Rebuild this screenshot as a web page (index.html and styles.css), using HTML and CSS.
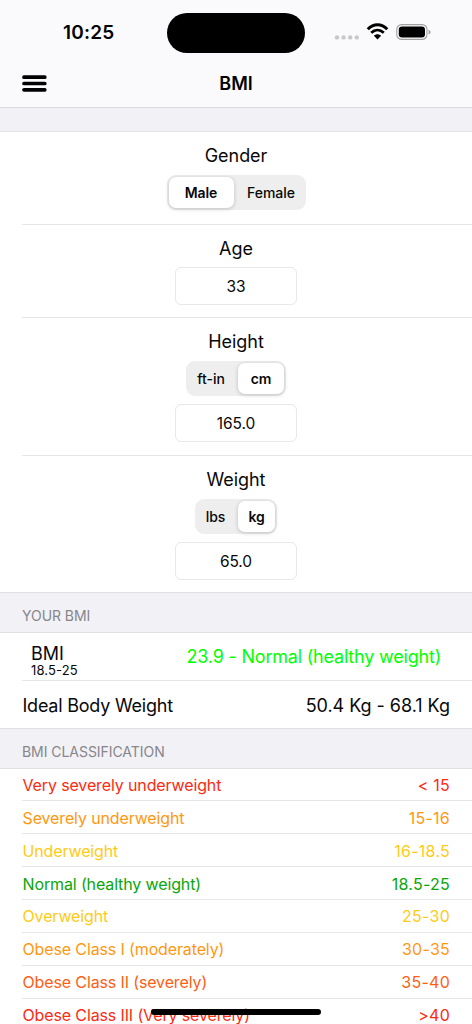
FILE: index.html
```html
<!DOCTYPE html>
<html lang="en">
<head>
<meta charset="utf-8">
<title>BMI</title>
<link rel="stylesheet" href="styles.css">
</head>
<body>
<div class="phone">
  <header class="top">
    <div class="status">
      <span class="time">10:25</span>
      <span class="island"></span>
      <svg class="indicators" width="98" height="20" viewBox="0 0 98 20">
        <g fill="#c8c8cc"><circle cx="3" cy="15.4" r="2.2"/><circle cx="9.6" cy="15.4" r="2.2"/><circle cx="16.2" cy="15.4" r="2.2"/><circle cx="22.8" cy="15.4" r="2.2"/></g>
        <path d="M33.8 7.2C39.5 1.2 47.5 1.2 53.2 7.2" fill="none" stroke="#000" stroke-width="3"/>
        <path d="M37.2 10.8C41 7.2 46 7.2 49.8 10.8" fill="none" stroke="#000" stroke-width="2.8"/>
        <path d="M39.9 13.8C42 11.8 45 11.8 47.1 13.8L43.5 17.4Z"/>
        <rect x="62.8" y="2.6" width="30.2" height="14.8" rx="4.8" fill="none" stroke="#a0a0a3" stroke-width="1.1"/>
        <rect x="64.8" y="4.5" width="26.2" height="11" rx="3.2"/>
        <path d="M94.6 7.7C97.2 8.6 97.2 11.6 94.6 12.5Z" fill="#a0a0a3"/>
      </svg>
    </div>
    <div class="nav">
      <svg class="menu" width="25" height="17" viewBox="0 0 25 17"><path d="M2 2.2H22.8M2 8.5H22.8M2 14.8H22.8" stroke="#000" stroke-width="3.7" stroke-linecap="round"/></svg>
      <h1 class="title">BMI</h1>
    </div>
  </header>
  <div class="gap"></div>
  <main>
    <section class="form">
      <div class="field gender"><label class="label">Gender</label>
        <div class="segment"><span class="option on">Male</span><span class="option">Female</span></div></div>
      <div class="field age"><label class="label">Age</label><div class="input">33</div></div>
      <div class="field height"><label class="label">Height</label>
        <div class="segment"><span class="option">ft-in</span><span class="option on">cm</span></div><div class="input">165.0</div></div>
      <div class="field weight"><label class="label">Weight</label>
        <div class="segment"><span class="option">lbs</span><span class="option on">kg</span></div><div class="input">65.0</div></div>
    </section>
    <h2 class="heading">YOUR BMI</h2>
    <section class="results">
      <div class="result bmi"><div class="name"><span>BMI</span><small class="range">18.5-25</small></div><span class="verdict">23.9 - Normal (healthy weight)</span></div>
      <div class="result"><span class="ideal">Ideal Body Weight</span><span class="kilos">50.4 Kg - 68.1 Kg</span></div>
    </section>
    <h2 class="heading">BMI CLASSIFICATION</h2>
    <section class="classes">
      <div class="class red"><span>Very severely underweight</span><span class="value">&lt; 15</span></div>
      <div class="class orange"><span>Severely underweight</span><span class="value">15-16</span></div>
      <div class="class yellow"><span>Underweight</span><span class="value">16-18.5</span></div>
      <div class="class green"><span>Normal (healthy weight)</span><span class="value">18.5-25</span></div>
      <div class="class yellow"><span>Overweight</span><span class="value">25-30</span></div>
      <div class="class orange"><span>Obese Class I (moderately)</span><span class="value">30-35</span></div>
      <div class="class deep"><span>Obese Class II (severely)</span><span class="value">35-40</span></div>
      <div class="class red"><span>Obese Class III (Very severely)</span><span class="value">&gt;40</span></div>
    </section>
  </main>
  <div class="home"></div>
</div>
</body>
</html>
```
FILE: styles.css
```css
* { box-sizing: border-box; }
body { margin: 0; background: #fff; color: #080808; font-family: Inter, "Liberation Sans", sans-serif; }
.phone { position: relative; width: 472px; height: 1024px; overflow: hidden; }
.top { height: 108px; background: #fafafc; border-bottom: 1px solid #d9d9dc; }
.status { height: 60px; display: grid; grid-template-columns: 167px 138px 1fr; padding-top: 12px; }
.time { padding-left: 63px; font-size: 19px; font-weight: 600; line-height: 42px; letter-spacing: .2px; color: #000; }
.island { height: 40px; margin-top: 1px; border-radius: 20px; background: #000; }
.indicators { margin: 10px 0 0 29px; }
.nav { height: 47px; display: grid; grid-template-columns: 1fr auto 1fr; align-items: center; padding-left: 22px; padding-right: 22px; }
.title { margin: 0; font-size: 18px; font-weight: 600; color: #000; }
.gap { height: 24px; background: #f2f1f6; border-bottom: 1px solid #e2e2e5; }
.form { height: 460px; }
.field { margin-left: 22px; padding: 11px 22px 0 0; display: flex; flex-direction: column; align-items: center; border-bottom: 1px solid #e6e6e7; }
.gender { height: 93px; }
.age { height: 93px; }
.height { height: 138px; }
.weight { height: 136px; border: 0; }
.label { height: 25px; margin-bottom: 7px; font-size: 18px; line-height: 25px; letter-spacing: -.05px; }
.age .label { margin-bottom: 6px; }
.segment { height: 35px; display: flex; padding: 2px; background: #eee; border-radius: 9px; font-size: 14px; font-weight: 500; }
.option { display: flex; align-items: center; justify-content: center; border-radius: 7px; padding-bottom: 1px; }
.on { background: #fff; box-shadow: 0 1px 4px rgba(0,0,0,.2); font-weight: 600; letter-spacing: -.1px; }
.gender .segment { width: 139px; }
.gender .option { width: 70px; padding-left: 5px; }
.gender .on { width: 65px; padding-left: 0; }
.height .segment { width: 100px; }
.height .option { width: 50px; padding-right: 4px; }
.height .on { width: 46px; padding-right: 0; }
.weight .segment { width: 82px; }
.weight .option { width: 41px; padding-right: 4px; }
.weight .on { width: 37px; padding-right: 0; }
.input { width: 122px; height: 38px; border: 1px solid #e8e8e9; border-radius: 6px; text-align: center; font-size: 15.5px; line-height: 37px; letter-spacing: -.1px; }
.segment + .input { margin-top: 8px; }
.heading { margin: 0; height: 41px; padding: 13px 22px 0; background: #f2f1f6; border-top: 1px solid #e1e1e5; border-bottom: 1px solid #e1e1e5; color: #86868b; font-size: 14px; font-weight: 400; line-height: 20px; letter-spacing: -.05px; }
.results { height: 95px; font-size: 18px; }
.result { height: 48px; margin-left: 22px; padding-right: 22px; display: flex; justify-content: space-between; align-items: center; }
.bmi { border-bottom: 1px solid #e6e6e7; padding: 0 31px 0 9px; }
.name { display: flex; flex-direction: column; padding-top: 8px; line-height: 18px; }
.range { font-size: 13px; line-height: 14px; letter-spacing: .15px; }
.verdict { color: #0f0; letter-spacing: -.2px; }
.ideal { padding-left: .5px; letter-spacing: -.22px; }
.kilos { letter-spacing: -.03px; }
.classes { font-size: 16px; letter-spacing: -.13px; }
.class { height: 33px; margin-left: 22px; padding: 1px 22px 0 .5px; display: flex; justify-content: space-between; align-items: center; border-bottom: 1px solid #e6e6e7; }
.class:first-child { height: 32px; }
.class:nth-child(n+5) { padding-top: 0; }
.value { letter-spacing: .25px; }
.red { color: #fc2b12; }
.orange { color: #ff9811; }
.yellow { color: #ffcb13; }
.green { color: #0aa60a; }
.deep { color: #ff5e14; }
.home { position: absolute; left: 151px; top: 1009px; width: 170px; height: 6px; border-radius: 3px; background: #000; }
```
